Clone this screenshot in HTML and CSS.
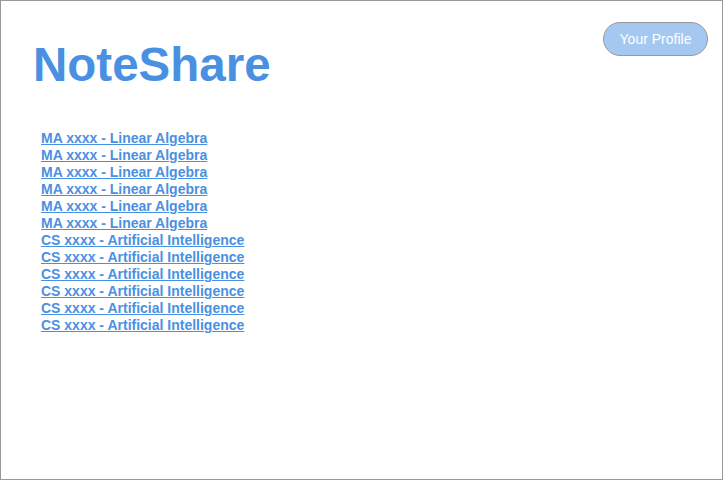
FILE: index.html
```html
<!DOCTYPE html>
<html>
<head>
<meta charset="utf-8">
<link rel="stylesheet" href="styles.css">
</head>
<body>
<div class="frame">
  <header class="header">
    <h1 class="title">NoteShare</h1>
    <button class="profile-btn">Your Profile</button>
  </header>
  <ul class="course-list">
    <li><a href="#">MA xxxx - Linear Algebra</a></li>
    <li><a href="#">MA xxxx - Linear Algebra</a></li>
    <li><a href="#">MA xxxx - Linear Algebra</a></li>
    <li><a href="#">MA xxxx - Linear Algebra</a></li>
    <li><a href="#">MA xxxx - Linear Algebra</a></li>
    <li><a href="#">MA xxxx - Linear Algebra</a></li>
    <li><a href="#">CS xxxx - Artificial Intelligence</a></li>
    <li><a href="#">CS xxxx - Artificial Intelligence</a></li>
    <li><a href="#">CS xxxx - Artificial Intelligence</a></li>
    <li><a href="#">CS xxxx - Artificial Intelligence</a></li>
    <li><a href="#">CS xxxx - Artificial Intelligence</a></li>
    <li><a href="#">CS xxxx - Artificial Intelligence</a></li>
  </ul>
</div>
</body>
</html>
```

FILE: styles.css
```css
html, body {
  margin: 0;
  padding: 0;
  background: #fff;
}
.frame {
  box-sizing: border-box;
  width: 723px;
  height: 480px;
  border: 1px solid #999;
  font-family: "Liberation Sans", Arial, sans-serif;
}
.header {
  display: flex;
  justify-content: space-between;
  align-items: flex-start;
  padding: 21px 14px 0 32px;
}
.title {
  margin: 16px 0 0 0;
  font-size: 47.5px;
  line-height: 53px;
  font-weight: bold;
  color: #4a90e2;
}
.profile-btn {
  box-sizing: border-box;
  height: 34px;
  width: 105px;
  padding: 0;
  border: 1px solid #999;
  border-radius: 17px;
  background: #a4c8f0;
  color: #fff;
  font-family: "Liberation Sans", Arial, sans-serif;
  font-size: 14px;
}
.course-list {
  list-style: none;
  margin: 39px 0 0 40px;
  padding: 0;
}
.course-list li {
  font-size: 14px;
  line-height: 17px;
  font-weight: bold;
}
.course-list a {
  color: #4a90e2;
  text-decoration: underline;
}
```
